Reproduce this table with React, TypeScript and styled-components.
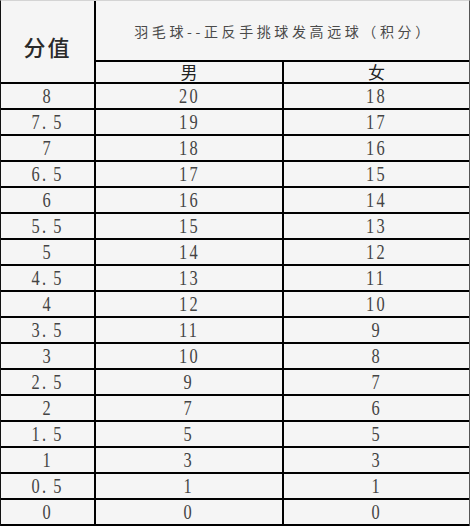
import React from 'react';
import styled, { createGlobalStyle } from 'styled-components';

const GlobalStyle = createGlobalStyle`
  html, body {
    margin: 0;
    padding: 0;
    background: #f5f5f5;
  }
`;

const ScoreTable = styled.table`
  width: 470px;
  table-layout: fixed;
  border-collapse: separate;
  border-spacing: 0;
  background: #f5f5f5;
  border-top: 1px solid #d4d4d4;
  border-left: 1px solid #111;
  border-right: 1px solid #555;
  color: #333;
`;

const Row = styled.tr<{ $h: number }>`
  height: ${(p) => p.$h}px;
`;

const Cell = styled.td<{ $last?: boolean }>`
  box-sizing: border-box;
  padding: 0;
  text-align: center;
  vertical-align: middle;
  border-bottom: 2px solid #000;
  border-right: ${(p) => (p.$last ? 'none' : '2px solid #000')};
  font-family: 'Liberation Serif', 'Times New Roman', serif;
  font-size: 19px;
  line-height: 22px;
  color: #3a3a3a;
`;

const Num = styled.span`
  display: inline-block;
  font-size: 21px;
  letter-spacing: 3px;
  transform: scaleX(0.78);
  color: #444;
`;

const Dot = styled.span`
  margin-right: 6px;
`;

const CornerCell = styled(Cell)`
  font-family: 'Noto Sans CJK SC', sans-serif;
  font-size: 22px;
  font-weight: 500;
  letter-spacing: 2px;
  color: #2a2a2a;
  padding-top: 8px;
`;

const TitleCell = styled(Cell)`
  font-family: 'Noto Sans CJK SC', sans-serif;
  font-size: 14px;
  letter-spacing: 3.6px;
  color: #4a4a4a;
  padding-left: 2px;
`;

const SexCell = styled(Cell)`
  font-family: 'Noto Sans CJK SC', sans-serif;
  font-size: 17px;
  line-height: 20px;
  color: #222;
`;

const rows: [string, string, string][] = [
  ['8', '20', '18'],
  ['7.5', '19', '17'],
  ['7', '18', '16'],
  ['6.5', '17', '15'],
  ['6', '16', '14'],
  ['5.5', '15', '13'],
  ['5', '14', '12'],
  ['4.5', '13', '11'],
  ['4', '12', '10'],
  ['3.5', '11', '9'],
  ['3', '10', '8'],
  ['2.5', '9', '7'],
  ['2', '7', '6'],
  ['1.5', '5', '5'],
  ['1', '3', '3'],
  ['0.5', '1', '1'],
  ['0', '0', '0'],
];

const Score = ({ value }: { value: string }) => {
  const [whole, half] = value.split('.');
  return (
    <Num>
      {whole}
      {half !== undefined && (
        <>
          <Dot>.</Dot>
          {half}
        </>
      )}
    </Num>
  );
};

const App = () => {
  return (
    <>
      <GlobalStyle />
      <ScoreTable>
        <colgroup>
          <col style={{ width: 95 }} />
          <col style={{ width: 188 }} />
          <col style={{ width: 185 }} />
        </colgroup>
        <thead>
          <Row $h={61}>
            <CornerCell rowSpan={2}>分值</CornerCell>
            <TitleCell colSpan={2} $last>
              羽毛球--正反手挑球发高远球（积分）
            </TitleCell>
          </Row>
          <Row $h={22}>
            <SexCell>男</SexCell>
            <SexCell $last>女</SexCell>
          </Row>
        </thead>
        <tbody>
          {rows.map(([score, male, female]) => (
            <Row $h={26} key={score}>
              <Cell>
                <Score value={score} />
              </Cell>
              <Cell>
                <Num>{male}</Num>
              </Cell>
              <Cell $last>
                <Num>{female}</Num>
              </Cell>
            </Row>
          ))}
        </tbody>
      </ScoreTable>
    </>
  );
};

export default App;
